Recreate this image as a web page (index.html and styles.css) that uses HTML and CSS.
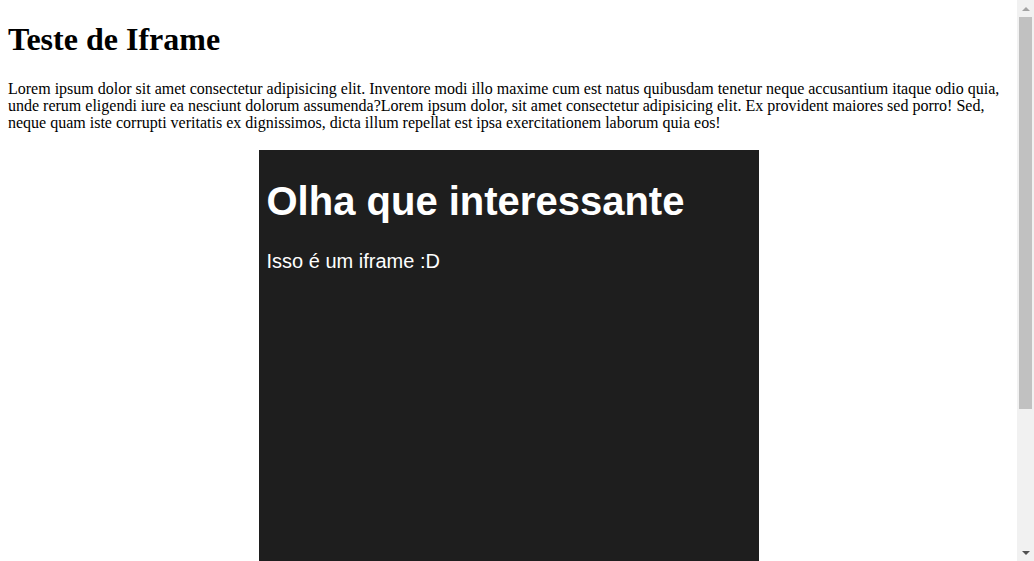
FILE: index.html
```html
<!DOCTYPE html>
<html lang="pt-BR">
<head>
<meta charset="utf-8">
<title>Teste de Iframe</title>
<link rel="stylesheet" href="styles.css">
</head>
<body>
<main class="page">
  <h1 class="title">Teste de Iframe</h1>
  <p class="text">Lorem ipsum dolor sit amet consectetur adipisicing elit. Inventore modi illo maxime cum est natus quibusdam tenetur neque accusantium itaque odio quia, unde rerum eligendi iure ea nesciunt dolorum assumenda?Lorem ipsum dolor, sit amet consectetur adipisicing elit. Ex provident maiores sed porro! Sed, neque quam iste corrupti veritatis ex dignissimos, dicta illum repellat est ipsa exercitationem laborum quia eos!</p>
  <div class="frame">
    <h1 class="frame-title">Olha que interessante</h1>
    <p class="frame-text">Isso é um iframe :D</p>
  </div>
</main>
<div class="scrollbar" aria-hidden="true">
  <div class="sb-btn"><span class="arrow-up"></span></div>
  <div class="sb-track"><div class="sb-thumb"></div></div>
  <div class="sb-btn"><span class="arrow-down"></span></div>
</div>
</body>
</html>
```
FILE: styles.css
```css
html {
  overflow: hidden;
  background: #fff;
}
body {
  margin: 0;
  padding: 0;
  font-family: "Liberation Serif", "Times New Roman", serif;
  color: #000;
  background: #fff;
}
.page {
  display: flow-root;
  padding: 21px 25px 0 8px;
}
.title {
  font-size: 32px;
  font-weight: bold;
  margin: 0 0 22px;
}
.text {
  font-size: 16px;
  line-height: 17px;
  margin: 0 0 19px;
}
.frame {
  width: 500px;
  height: 594px;
  box-sizing: border-box;
  margin: 0 auto;
  padding: 29px 8px 0;
  background: #1e1e1e;
  color: #fff;
  font-family: "Liberation Sans", Arial, sans-serif;
  overflow: hidden;
}
.frame-title {
  font-size: 40px;
  font-weight: bold;
  margin: 0 0 26px;
}
.frame-text {
  font-size: 20px;
  margin: 0;
}
.scrollbar {
  position: fixed;
  top: 0;
  right: 0;
  width: 17px;
  height: 100%;
  background: #f1f1f1;
  display: flex;
  flex-direction: column;
}
.sb-btn {
  height: 17px;
  display: flex;
  align-items: center;
  justify-content: center;
  flex: none;
}
.arrow-up {
  width: 0;
  height: 0;
  border-left: 4px solid transparent;
  border-right: 4px solid transparent;
  border-bottom: 4px solid #a3a3a3;
}
.arrow-down {
  width: 0;
  height: 0;
  border-left: 4px solid transparent;
  border-right: 4px solid transparent;
  border-top: 4px solid #505050;
}
.sb-track {
  flex: 1;
  padding: 0 2px;
}
.sb-thumb {
  height: 392px;
  background: #c1c1c1;
}
```
